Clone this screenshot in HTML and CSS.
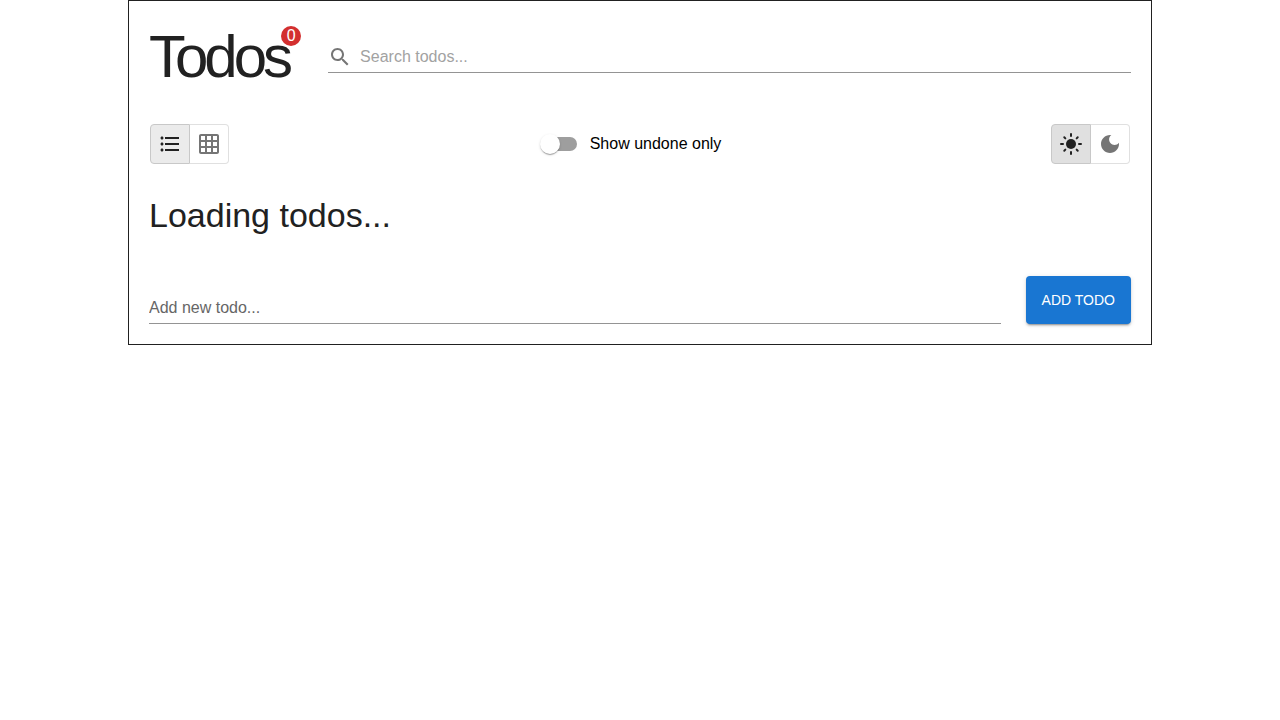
FILE: index.html
```html
<!DOCTYPE html>
<html lang="en">
<head>
<meta charset="utf-8">
<meta name="viewport" content="width=device-width, initial-scale=1">
<title>Todos</title>
<link rel="stylesheet" href="styles.css">
</head>
<body>
<main class="app">
  <header class="header">
    <h1 class="title">Todos<span class="badge">0</span></h1>
    <label class="search">
      <svg class="icon search-icon" viewBox="0 0 24 24" aria-hidden="true"><path d="M15.5 14h-.79l-.28-.27C15.41 12.59 16 11.11 16 9.5 16 5.91 13.09 3 9.5 3S3 5.91 3 9.5 5.91 16 9.5 16c1.61 0 3.09-.59 4.23-1.57l.27.28v.79l5 4.99L20.49 19l-4.99-5zm-6 0C7.01 14 5 11.99 5 9.5S7.01 5 9.5 5 14 7.01 14 9.5 11.99 14 9.5 14z"/></svg>
      <input class="field search-field" type="text" placeholder="Search todos..." aria-label="Search todos">
    </label>
  </header>

  <div class="toolbar">
    <div class="toggle-group" role="group" aria-label="Layout">
      <button class="toggle toggle-list" type="button" aria-pressed="true" aria-label="List"><svg class="icon" viewBox="0 0 24 24" aria-hidden="true"><path d="M4 10.5c-.83 0-1.5.67-1.5 1.5s.67 1.5 1.5 1.5 1.5-.67 1.5-1.5-.67-1.5-1.5-1.5zm0-6c-.83 0-1.5.67-1.5 1.5S3.17 7.5 4 7.5 5.5 6.83 5.5 6 4.83 4.5 4 4.5zm0 12c-.83 0-1.5.68-1.5 1.5s.68 1.5 1.5 1.5 1.5-.68 1.5-1.5-.67-1.5-1.5-1.5zM7 19h14v-2H7v2zm0-6h14v-2H7v2zm0-8v2h14V5H7z"/></svg></button>
      <button class="toggle" type="button" aria-pressed="false" aria-label="Grid"><svg class="icon" viewBox="0 0 24 24" aria-hidden="true"><path d="M20 2H4c-1.1 0-2 .9-2 2v16c0 1.1.9 2 2 2h16c1.1 0 2-.9 2-2V4c0-1.1-.9-2-2-2zM8 20H4v-4h4v4zm0-6H4v-4h4v4zm0-6H4V4h4v4zm6 12h-4v-4h4v4zm0-6h-4v-4h4v4zm0-6h-4V4h4v4zm6 12h-4v-4h4v4zm0-6h-4v-4h4v4zm0-6h-4V4h4v4z"/></svg></button>
    </div>

    <label class="switch">
      <input class="switch-input" type="checkbox" role="switch">
      <span>Show undone only</span>
    </label>

    <div class="toggle-group" role="group" aria-label="Theme">
      <button class="toggle toggle-light" type="button" aria-pressed="true" aria-label="Light"><svg class="icon" viewBox="0 0 24 24" aria-hidden="true"><circle cx="12" cy="12" r="5"/><path class="rays" d="M12 2v2M12 20v2M2 12h2M20 12h2M5.28 5.28l1.06 1.06M17.66 17.66l1.06 1.06M5.28 18.72l1.06-1.06M17.66 6.34l1.06-1.06"/></svg></button>
      <button class="toggle" type="button" aria-pressed="false" aria-label="Dark"><svg class="icon" viewBox="0 0 24 24" aria-hidden="true"><path d="M12 3c-4.97 0-9 4.03-9 9s4.03 9 9 9 9-4.03 9-9c0-.46-.04-.92-.1-1.36-.98 1.37-2.58 2.26-4.4 2.26-2.98 0-5.4-2.42-5.4-5.4 0-1.81.89-3.42 2.26-4.4-.44-.06-.9-.1-1.36-.1z"/></svg></button>
    </div>
  </div>

  <h2 class="status">Loading todos...</h2>

  <form class="add-form">
    <input class="field add-field" type="text" placeholder="Add new todo..." aria-label="Add new todo">
    <button class="add-button" type="button">ADD TODO</button>
  </form>
</main>
</body>
</html>
```
FILE: styles.css
```css
* {
  box-sizing: border-box;
}

body {
  margin: 0;
  background: #fff;
  color: #212121;
  font-family: "Liberation Sans", Arial, sans-serif;
  font-size: 16px;
  line-height: 24px;
}

.app {
  width: 80%;
  margin: 0 auto;
  padding: 20px;
  border: 1px solid #212121;
}

.header {
  display: flex;
  align-items: center;
  gap: 39px;
}

.title {
  position: relative;
  margin: 0;
  font-size: 60px;
  font-weight: 400;
  line-height: 72px;
  letter-spacing: -4px;
}

.badge {
  position: absolute;
  top: 5px;
  right: -12px;
  min-width: 20px;
  height: 20px;
  border-radius: 10px;
  background: #d32f2f;
  color: #fff;
  font-size: 16px;
  line-height: 20px;
  letter-spacing: normal;
  text-align: center;
}

.search {
  display: flex;
  flex: 1;
  align-items: center;
  gap: 8px;
  height: 32px;
  border-bottom: 1px solid #949494;
}

.icon {
  display: block;
  width: 24px;
  height: 24px;
  fill: currentColor;
}

.search-icon {
  color: #757575;
}

.field {
  flex: 1;
  min-width: 0;
  height: 32px;
  padding: 0;
  border: 0;
  outline: 0;
  background: none;
  color: #212121;
  font: inherit;
}

.search-field::placeholder {
  color: #a2a2a2;
  opacity: 1;
}

.toolbar {
  display: flex;
  align-items: center;
  justify-content: space-between;
  margin-top: 31px;
  padding: 0 1px;
}

.toggle-group {
  display: flex;
}

.toggle {
  width: 39px;
  height: 40px;
  padding: 0 7px;
  border: 1px solid #e0e0e0;
  border-left: 0;
  border-radius: 0 4px 4px 0;
  background: #fff;
  color: #757575;
}

.toggle:first-child {
  width: 40px;
  border: 1px solid #c8c8c8;
  border-radius: 4px 0 0 4px;
  color: #212121;
}

.toggle-list {
  background: #ebebeb;
}

.toggle-light {
  background: #e0e0e0;
}

.rays {
  stroke: currentColor;
  stroke-width: 2;
  stroke-linecap: round;
}

.switch {
  display: flex;
  align-items: center;
  gap: 13px;
  margin-right: 16px;
  color: #000;
}

.switch-input {
  position: relative;
  width: 34px;
  height: 14px;
  margin: 0;
  border-radius: 7px;
  background: #9e9e9e;
  appearance: none;
}

.switch-input::before {
  content: "";
  position: absolute;
  top: -3px;
  left: -3px;
  width: 20px;
  height: 20px;
  border-radius: 50%;
  background: #fff;
  box-shadow: 0 2px 1px -1px rgba(0, 0, 0, 0.2), 0 1px 1px rgba(0, 0, 0, 0.14), 0 1px 3px rgba(0, 0, 0, 0.12);
}

.switch-input:checked::before {
  left: 17px;
}

.status {
  margin: 30px 0 0;
  font-size: 34px;
  font-weight: 400;
  line-height: 42px;
}

.add-form {
  display: flex;
  align-items: flex-end;
  gap: 25px;
  margin-top: 40px;
}

.add-field {
  border-bottom: 1px solid #949494;
}

.add-field::placeholder {
  color: #666;
  opacity: 1;
}

.add-button {
  height: 48px;
  padding: 0 16px;
  border: 0;
  border-radius: 4px;
  background: #1976d2;
  color: #fff;
  font-family: inherit;
  font-size: 14px;
  box-shadow: 0 3px 1px -2px rgba(0, 0, 0, 0.2), 0 2px 2px rgba(0, 0, 0, 0.14), 0 1px 5px rgba(0, 0, 0, 0.12);
}
```
